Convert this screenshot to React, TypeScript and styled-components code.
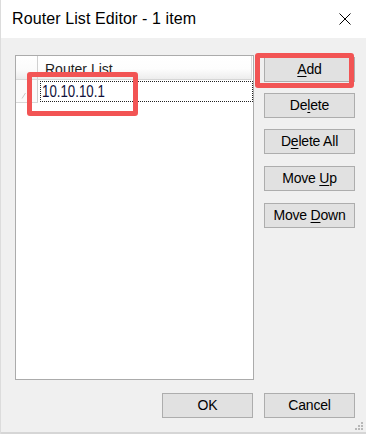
import React from "react";
import styled, { createGlobalStyle } from "styled-components";

const Global = createGlobalStyle`
  html, body { margin: 0; padding: 0; background: #f0f0f0; }
  body { width: 366px; height: 434px; overflow: hidden; }
  * { box-sizing: border-box; }
`;

const Window = styled.div`
  position: relative;
  width: 366px;
  height: 434px;
  display: flex;
  flex-direction: column;
  background: #f0f0f0;
  border-left: 1px solid #dcdcdc;
  overflow: hidden;
`;

const TitleBar = styled.div`
  height: 38px;
  flex: none;
  display: flex;
  align-items: center;
  justify-content: space-between;
  padding: 0 15px 0 11px;
  background: #ffffff;
`;

const Title = styled.div`
  font-family: "Liberation Sans", Arial, sans-serif;
  font-size: 16px;
  color: #000;
  letter-spacing: 0.1px;
`;

const CloseIcon = styled.svg`
  width: 12px;
  height: 12px;
  display: block;
`;

const Body = styled.div`
  flex: 1;
  display: grid;
  grid-template-columns: 239px 91px;
  grid-template-rows: 325px auto;
  column-gap: 10px;
  row-gap: 13px;
  padding: 17px 11px 0 14px;
  align-content: start;
`;

const GridBox = styled.div`
  border: 1px solid #ababab;
  background: #ffffff;
  display: flex;
  flex-direction: column;
`;

const GridRow = styled.div<{ $h: number }>`
  display: grid;
  grid-template-columns: 22px 1fr;
  height: ${(p) => p.$h}px;
`;

const RowHeadCell = styled.div<{ $head?: boolean }>`
  border-right: 1px solid #d0d0d0;
  border-bottom: 1px solid #d8d8d8;
  background: ${(p) => (p.$head ? "linear-gradient(#ffffff, #fbfbfb 60%, #ececec)" : "#fbfbfb")};
  display: flex;
  align-items: flex-end;
  padding: 0 0 3px 5px;
`;

const ColumnHead = styled.div`
  border-bottom: 1px solid #d5d5d5;
  border-right: 1px solid #dcdcdc;
  margin-right: 1px;
  background: linear-gradient(#ffffff, #fdfdfd 55%, #ededed);
  display: flex;
  align-items: center;
  padding: 2px 0 0 7px;
  font-family: "Liberation Sans", Arial, sans-serif;
  font-size: 14px;
  color: #1e1e1e;
`;

const DataCell = styled.div`
  padding: 1px 0 1px 2px;
  display: flex;
`;

const FocusBox = styled.div`
  flex: 1;
  border: 1px dotted #222;
  display: flex;
  align-items: center;
  padding: 1px 0 0 1px;
`;

const CellText = styled.span`
  display: inline-block;
  font-family: "Liberation Sans", Arial, sans-serif;
  font-size: 16px;
  color: #10103a;
  transform: scaleX(0.83);
  transform-origin: left center;
`;

const ButtonColumn = styled.div`
  display: flex;
  flex-direction: column;
  gap: 11px;
  padding-top: 2px;
`;

const Btn = styled.button`
  width: 91px;
  height: 25px;
  flex: none;
  border: 1px solid #adadad;
  background: #e1e1e1;
  border-radius: 0;
  padding: 0;
  margin: 0;
  font-family: "Liberation Sans", Arial, sans-serif;
  font-size: 14px;
  letter-spacing: -0.2px;
  color: #000;
  text-align: center;
  line-height: 23px;
  &:nth-child(n + 4) {
    margin-top: 1px;
  }
`;

const Footer = styled.div`
  grid-column: 1 / span 2;
  display: flex;
  justify-content: flex-end;
  gap: 11px;
`;

const BottomEdge = styled.div`
  height: 2px;
  flex: none;
  background: #d6d6d6;
`;

const Highlight = styled.div<{ $x: number; $y: number; $w: number; $h: number }>`
  position: absolute;
  left: ${(p) => p.$x}px;
  top: ${(p) => p.$y}px;
  width: ${(p) => p.$w}px;
  height: ${(p) => p.$h}px;
  border: 5px solid #f25454;
  border-radius: 3px;
  pointer-events: none;
`;

const Grip = styled.svg`
  position: absolute;
  right: 3px;
  bottom: 4px;
  width: 9px;
  height: 9px;
`;

const Key = styled.span`
  text-decoration: underline;
  text-underline-offset: 2px;
`;

export default function App() {
  return (
    <>
      <Global />
      <Window>
        <TitleBar>
          <Title>Router List Editor - 1 item</Title>
          <CloseIcon viewBox="0 0 12 12">
            <path d="M0.5 0.5 L11.5 11.5 M11.5 0.5 L0.5 11.5" stroke="#000" strokeWidth="1" fill="none" />
          </CloseIcon>
        </TitleBar>
        <Body>
          <GridBox>
            <GridRow $h={24}>
              <RowHeadCell $head />
              <ColumnHead>Router List</ColumnHead>
            </GridRow>
            <GridRow $h={23}>
              <RowHeadCell>
                <svg width="6" height="7" viewBox="0 0 6 7">
                  <path d="M1 6.5 L4.5 1" stroke="#c9c9c9" strokeWidth="1" fill="none" />
                </svg>
              </RowHeadCell>
              <DataCell>
                <FocusBox>
                  <CellText>10.10.10.1</CellText>
                </FocusBox>
              </DataCell>
            </GridRow>
          </GridBox>
          <ButtonColumn>
            <Btn><Key>A</Key>dd</Btn>
            <Btn>De<Key>l</Key>ete</Btn>
            <Btn>D<Key>e</Key>lete All</Btn>
            <Btn>Move <Key>U</Key>p</Btn>
            <Btn>Move <Key>D</Key>own</Btn>
          </ButtonColumn>
          <Footer>
            <Btn>OK</Btn>
            <Btn>Cancel</Btn>
          </Footer>
        </Body>
        <BottomEdge />
        <Highlight $x={26} $y={72} $w={111} $h={44} />
        <Highlight $x={254} $y={53} $w={99} $h={35} />
        <Grip viewBox="0 0 9 9">
          <rect x="7" y="1" width="2" height="2" fill="#b8b8b8" />
          <rect x="4" y="4" width="2" height="2" fill="#b8b8b8" />
          <rect x="7" y="4" width="2" height="2" fill="#b8b8b8" />
          <rect x="1" y="7" width="2" height="2" fill="#b8b8b8" />
          <rect x="4" y="7" width="2" height="2" fill="#b8b8b8" />
          <rect x="7" y="7" width="2" height="2" fill="#b8b8b8" />
        </Grip>
      </Window>
    </>
  );
}
